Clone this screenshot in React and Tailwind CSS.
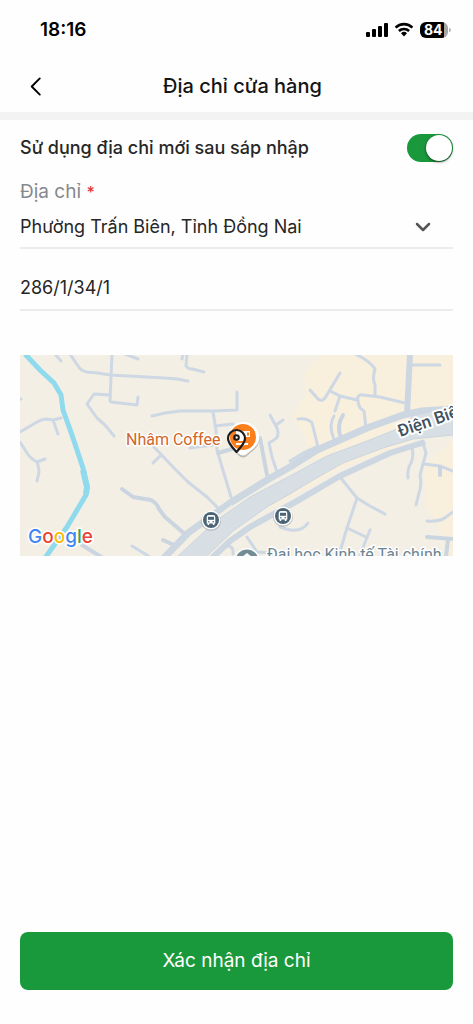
import React, { useState } from "react";
import { ChevronDown } from "lucide-react";

const LANES = [
    "M35 -1 L41 6",
    "M50 -1 L58 11 Q61 16 67 17 L78 18 L90 20 L145 23 L157 24 L168 26",
    "M92 -1 L90 46 L91 47 L117 50 L118 42",
    "M90 40 L74 39 L67 49 L77 63 L85 70 L94 81",
    "M105 -1 L118 4",
    "M132 61 L145 58 L160 56 L193 56 L217 55 L217 37",
    "M-1 44 L1 44",
    "M0 77 L17 67 Q22 64 27 64 L33 65 L41 63",
    "M33 65 L38 79",
    "M0 87 L7 98 Q10 103 17 107 L25 104",
    "M17 107 Q19 112 19 117 L17 126",
    "M134 92 L153 112 L168 127 L187 142 L198 153",
    "M133 108 L140 101",
    "M112 191 L130 202",
    "M162 4 L163 -1",
    "M167 -1 L166 11 Q168 14 172 14 L184 17",
    "M193 57 L196 75 L197 95 L202 112 L211 142",
    "M195 71 L213 69",
    "M170 93 L193 90",
    "M250 60 L257 73 Q260 82 254 85 L249 88 L252 102 L257 117",
    "M256 70 L263 65",
    "M278 64 Q288 63 292 68 L298 92",
    "M270 106 L285 97 L296 92",
    "M335 -1 Q350 6 355 14 Q352 24 355 30 L355 40",
    "M290 35 L298 44 Q302 47 305 43 L320 18",
    "M310 36 L320 41 L337 45 Q338 39 343 40 L360 42 L385 48",
    "M320 41 L315 56",
    "M338 45 Q338 53 344 56 L346 73",
    "M393 10 L420 10",
    "M314 61 Q308 70 314 84",
    "M392 92 Q394 102 391 108 Q387 114 388 123",
    "M403 88 L406 98 L400 120 Q402 130 399 138 L396 150",
    "M404 109 L420 111 L433 116",
    "M407 166 Q420 167 426 162 L433 157",
    "M320 122 L337 143 L350 151 L365 159",
    "M337 143 L327 173 L319 200",
    "M327 173 L346 182",
    "M350 175 L340 200",
    "M260 172 Q280 180 288 168",
    "M227 182 L237 197 L252 198",
    "M207 191 Q214 191 213 199",
];

const STREETS = [
    "M102 134 L113 142 L131 145 Q137 148 139 154 L145 162 L166 180",
    "M143 185 L154 190",
    "M62 190 L83 203",
    "M198 98 L212 94",
    "M240 83 L247 120",
    "M323 60 Q316 71 321 83",
    "M420 112 L420 120",
    "M407 182 L433 184",
    "M428 184 L426 202",
];

function StatusBar() {
    return (
        <div className="flex h-15 items-center justify-between pl-10 pr-[22px]">
            <span className="text-[19px] font-semibold text-black">18:16</span>
            <div className="flex items-center gap-1.5">
                <svg width="22" height="16" viewBox="0 0 22 16" fill="#000">
                    <rect x="0" y="10" width="4" height="5" rx="1" />
                    <rect x="6" y="7" width="4" height="8" rx="1" />
                    <rect x="12" y="4" width="4" height="11" rx="1" />
                    <rect x="18" y="1" width="4" height="14" rx="1" />
                </svg>
                <svg width="20" height="16" viewBox="0 0 20 16">
                    <path d="M1.6 5.6 A12 12 0 0 1 18.4 5.6" fill="none" stroke="#000" strokeWidth="2.6" />
                    <path d="M4.9 9 A7.3 7.3 0 0 1 15.1 9" fill="none" stroke="#000" strokeWidth="2.5" />
                    <path d="M7 11.3 A4.3 4.3 0 0 1 13 11.3 L10 14.6 Z" fill="#000" />
                </svg>
                <div className="flex items-center gap-px">
                    <div className="flex h-4 w-7 items-center rounded-md bg-linear-to-r from-black from-84% to-[#a6a6a6] to-84% pl-1 text-sm font-bold text-white">84</div>
                    <span className="h-1 w-0.5 rounded-r-full bg-[#b5b5b5]" />
                </div>
            </div>
        </div>
    );
}

function BusStop({ x, y }) {
    return (
        <g transform={`translate(${x} ${y})`}>
            <circle cy="1" r="10" fill="#8a8f94" opacity="0.45" />
            <circle r="9.4" fill="#fff" />
            <circle r="8" fill="#4b6576" />
            <path d="M-4.3 -2.8 Q-4.3 -5 -2 -5 H2 Q4.3 -5 4.3 -2.8 V3.4 H3.4 V5 H1.8 V3.4 H-1.8 V5 H-3.4 V3.4 H-4.3 Z" fill="#fff" />
            <rect x="-3" y="-3.2" width="6" height="3" fill="#4b6576" />
            <circle cx="-2.2" cy="1.7" r="0.8" fill="#4b6576" />
            <circle cx="2.2" cy="1.7" r="0.8" fill="#4b6576" />
        </g>
    );
}

function StoreMap() {
    return (
        <svg className="block w-full" viewBox="0 0 433 201" role="img" aria-label="Nhâm Coffee">
            <rect width="433" height="202" fill="#f3efe4" />
            <path d="M300 0 H433 V60 L385 70 L330 92 L290 106 L284 78 L271 62 L286 40 L284 20 Z" fill="#f8efdd" />
            <path d="M404 112 L433 84 V202 H428 L420 175 L406 150 Z" fill="#f8efdd" />

            <path
                d="M5 -1 L20 15 L34 28 L41 40 L43 55 L52 80 L63 113 L67 132 L66 140 L47 172 L25 203"
                fill="none"
                stroke="#90daed"
                strokeWidth="5"
                strokeLinejoin="round"
            />
            <path d="M63 115 L67 132 L66 139" fill="none" stroke="#90daed" strokeWidth="6" />

            <g fill="none" stroke="#ced8e4" strokeWidth="3" strokeLinecap="round" strokeLinejoin="round">
                {LANES.map((d) => (
                    <path key={d} d={d} />
                ))}
            </g>
            <g fill="none" stroke="#cbd5e0" strokeWidth="4" strokeLinecap="round" strokeLinejoin="round">
                {STREETS.map((d) => (
                    <path key={d} d={d} />
                ))}
            </g>

            {/* main road with its two side roads */}
            <path d="M240 140 L310 98 L375 73 L397 84 L320 114 L250 154 Z" fill="#f8efdd" />
            <g fill="none" stroke="#cdd7e1" strokeWidth="6" strokeLinejoin="round">
                <path d="M390 -1 L387 60" />
                <path d="M143 204 L168 178 L210 148 L247 125 L270 112 L297 95 L347 73 L383 60 L402 56 L433 54" strokeWidth="7" />
                <path d="M191 204 L210 186 L230 172 L277 146 L320 121 L370 98 L405 87" />
            </g>
            <path
                d="M157 202 L197 165 L230 142 L270 121 L307 101 L347 86 L377 74 L395 60 L433 52 V80 L393 84 L363 93 L323 108 L293 125 L270 139 L247 152 L213 176 L186 202 Z"
                fill="#d7dfe5"
                stroke="#cbd5df"
                strokeWidth="1"
            />
            <path d="M150 202 L180 175 L212 150" fill="none" stroke="#f3efe4" strokeWidth="1" />

            <g fontFamily="Roboto, sans-serif" fontWeight="500" paintOrder="stroke" stroke="#fff" strokeLinejoin="round">
                <text x="106" y="90" fontSize="16" fontWeight="400" fill="#d0652a" strokeWidth="3">Nhâm Coffee</text>
                <text x="380" y="82" fontSize="17" fill="#3f5060" strokeWidth="4" transform="rotate(-19 380 82)">Điện Biên</text>
                <text x="247" y="205" fontSize="16" fontWeight="400" fill="#6b8492" strokeWidth="3">Đại học Kinh tế Tài chính</text>
            </g>

            <BusStop x={191} y={165} />
            <BusStop x={263} y={161} />
            <circle cx="227" cy="206" r="13" fill="#fff" />
            <circle cx="227" cy="206" r="11.5" fill="#728d94" />
            <path d="M222 202 L227 198 L232 202 Z" fill="#fff" />

            {/* cafe marker */}
            <path d="M223 69 A15.5 15.5 0 0 1 239 85 C239 93 231 97 228 100 Q223 105 218 100 C216 96 208 93 208 85 A15.5 15.5 0 0 1 223 69 Z" fill="#858585" opacity="0.5" />
            <path d="M223 67 A15.5 15.5 0 0 1 239 83 C239 91 232 94 228 98 Q223 103 218 98 C215 94 208 91 208 83 A15.5 15.5 0 0 1 223 67 Z" fill="#fff" />
            <circle cx="223" cy="82" r="13" fill="#fc7f1d" />
            <path d="M216 76 H230 V82 H226 Q226 86 222 86 H220 Q216 86 216 82 Z M216 88 H228 V90 H216 Z" fill="#fff" />
            <path d="M227 77.5 H229 V80.5 H227 Z" fill="#fc7f1d" />
            {/* selected position */}
            <g fill="none" stroke="#1c1c1c">
                <path d="M216.5 97 C212 92 208 88 208 83.5 A8.500 8.500 0 0 1 225 83.5 C225 88 221 92 216.5 97 Z" strokeWidth="2.2" strokeLinejoin="round" />
                <circle cx="216.5" cy="82.5" r="2.3" strokeWidth="2" />
            </g>

            <text x="8" y="188" fontFamily="Inter, sans-serif" fontSize="19" fontWeight="500" paintOrder="stroke" stroke="#fff" strokeWidth="3">
                <tspan fill="#4285f4">G</tspan>
                <tspan fill="#ea4335">o</tspan>
                <tspan fill="#fbbc05">o</tspan>
                <tspan fill="#4285f4">g</tspan>
                <tspan fill="#34a853">l</tspan>
                <tspan fill="#ea4335">e</tspan>
            </text>
        </svg>
    );
}

export default function App() {
    const [merged, setMerged] = useState(true);
    const [street, setStreet] = useState("286/1/34/1");

    return (
        <div className="flex min-h-screen flex-col bg-[#fefefe] font-[Inter,sans-serif] text-[#262626]">
            <StatusBar />

            <header className="flex h-13 items-center pl-7 pr-8">
                <button type="button" aria-label="Quay lại" className="flex size-4 shrink-0 items-center justify-center text-black">
                    <svg width="12" height="19" viewBox="0 0 12 20" className="shrink-0" fill="none" stroke="currentColor" strokeWidth="2" strokeLinecap="round" strokeLinejoin="round">
                        <path d="M10 1.5 L1.5 10 L10 18.5" />
                    </svg>
                </button>
                <h1 className="flex-1 text-center text-xl font-medium text-[#141414]">Địa chỉ cửa hàng</h1>
            </header>
            <div className="h-2 bg-[#f3f3f3]" />

            <main className="flex flex-1 flex-col px-5 pt-3.5">
                <div className="flex items-center justify-between">
                    <label htmlFor="merged" className="text-lg font-medium">Sử dụng địa chỉ mới sau sáp nhập</label>
                    <input
                        id="merged"
                        type="checkbox"
                        role="switch"
                        checked={merged}
                        onChange={(e) => setMerged(e.target.checked)}
                        className="flex h-7 w-[46px] appearance-none items-center rounded-full bg-gray-300 p-px before:size-6.5 before:rounded-full before:bg-white before:shadow before:shadow-black/50 checked:justify-end checked:bg-[#1a993c]"
                    />
                </div>

                <label htmlFor="area" className="mt-4 text-[19px] leading-7 text-[#85888c]">
                    Địa chỉ <span className="text-base font-medium text-[#e5383b]">*</span>
                </label>
                <div className="flex items-center border-b-2 border-[#ececec] pr-[18px]">
                    <select id="area" className="h-[41px] flex-1 appearance-none bg-transparent text-lg">
                        <option>Phường Trấn Biên, Tỉnh Đồng Nai</option>
                    </select>
                    <ChevronDown className="pointer-events-none size-6 text-[#555]" strokeWidth={2.5} />
                </div>

                <input
                    type="text"
                    aria-label="Số nhà, tên đường"
                    value={street}
                    onChange={(e) => setStreet(e.target.value)}
                    className="mt-4 h-[46px] w-full border-b-2 border-[#ececec] bg-transparent text-lg outline-none"
                />

                <div className="mt-11">
                    <StoreMap />
                </div>
            </main>

            <footer className="px-5 pb-[34px]">
                <button type="button" className="h-[58px] w-full rounded-lg bg-[#1a993c] text-[19px] text-white">
                    Xác nhận địa chỉ
                </button>
            </footer>
        </div>
    );
}
